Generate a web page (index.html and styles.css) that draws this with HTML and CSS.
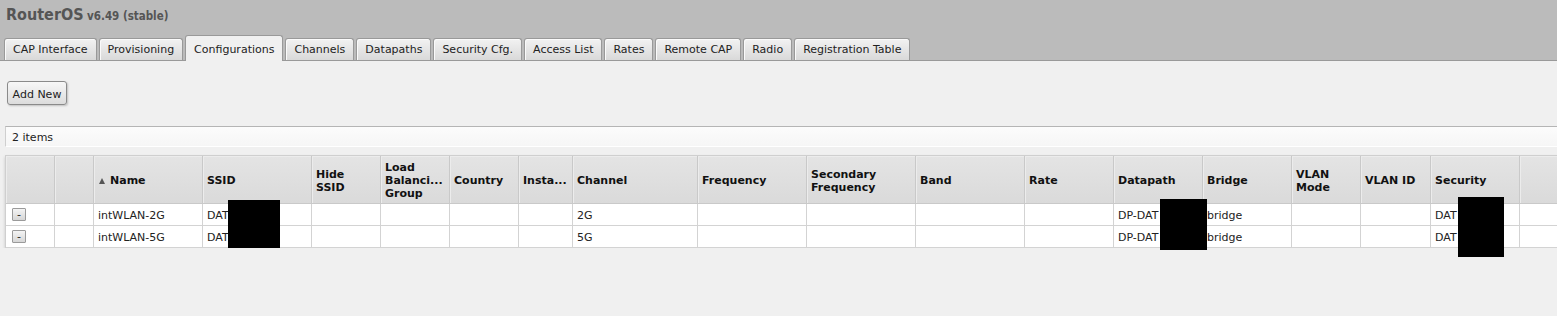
FILE: index.html
```html
<!DOCTYPE html>
<html>
<head>
<meta charset="utf-8">
<title>RouterOS</title>
<link rel="stylesheet" href="styles.css">
</head>
<body>
<div class="header">
  <div class="title"><span class="brand">RouterOS</span> <span class="version">v6.49 (stable)</span></div>
  <ul class="tabs">
    <li class="tab">CAP Interface</li>
    <li class="tab">Provisioning</li>
    <li class="tab active">Configurations</li>
    <li class="tab">Channels</li>
    <li class="tab">Datapaths</li>
    <li class="tab">Security Cfg.</li>
    <li class="tab">Access List</li>
    <li class="tab">Rates</li>
    <li class="tab">Remote CAP</li>
    <li class="tab">Radio</li>
    <li class="tab">Registration Table</li>
  </ul>
</div>
<div class="content">
  <div class="toolbar"><button class="btn">Add New</button></div>
  <div class="items">2 items</div>
  <table class="grid">
    <colgroup>
      <col class="c49"><col class="c39"><col class="c109"><col class="c109"><col class="c69"><col class="c69"><col class="c69"><col class="c54"><col class="c125"><col class="c109"><col class="c109"><col class="c109"><col class="c89"><col class="c89"><col class="c89"><col class="c69"><col class="c70"><col class="c89"><col class="c100">
    </colgroup>
    <thead>
      <tr>
        <th></th><th></th>
        <th><span class="sort"></span>Name</th>
        <th>SSID</th>
        <th>Hide<br>SSID</th>
        <th>Load<br>Balanci...<br>Group</th>
        <th>Country</th>
        <th>Insta...</th>
        <th>Channel</th>
        <th>Frequency</th>
        <th>Secondary<br>Frequency</th>
        <th>Band</th>
        <th>Rate</th>
        <th>Datapath</th>
        <th>Bridge</th>
        <th>VLAN<br>Mode</th>
        <th>VLAN ID</th>
        <th>Security</th>
        <th></th>
      </tr>
    </thead>
    <tbody>
      <tr>
        <td class="first"><span class="minus">-</span></td><td></td>
        <td>intWLAN-2G</td><td>DAT</td><td></td><td></td><td></td><td></td>
        <td>2G</td><td></td><td></td><td></td><td></td>
        <td>DP-DAT</td><td>bridge</td><td></td><td></td><td>DAT</td><td></td>
      </tr>
      <tr>
        <td class="first"><span class="minus">-</span></td><td></td>
        <td>intWLAN-5G</td><td>DAT</td><td></td><td></td><td></td><td></td>
        <td>5G</td><td></td><td></td><td></td><td></td>
        <td>DP-DAT</td><td>bridge</td><td></td><td></td><td>DAT</td><td></td>
      </tr>
    </tbody>
  </table>
</div>
<div class="redact r-ssid"></div>
<div class="redact r-dp"></div>
<div class="redact r-sec"></div>
</body>
</html>
```

FILE: styles.css
```css
* { box-sizing: border-box; }
html, body { margin: 0; padding: 0; }
body {
  background: #f0f0f0;
  font-family: "DejaVu Sans", Verdana, sans-serif;
  font-size: 11px;
  color: #222;
  overflow: hidden;
  position: relative;
  min-height: 316px;
}
.header {
  background: #bbbbbb;
  height: 61px;
  border-bottom: 1px solid #999;
  display: flex;
  flex-direction: column;
  justify-content: space-between;
}
.title {
  padding: 5px 0 0 6px;
  line-height: 20px;
  color: #555;
  font-family: "DejaVu Sans Condensed", "DejaVu Sans", sans-serif;
  font-stretch: condensed;
  font-weight: bold;
  white-space: nowrap;
}
.brand { font-size: 16px; }
.version { font-size: 11.5px; }
.tabs {
  list-style: none;
  margin: 0;
  padding: 0 0 0 4px;
  display: flex;
  align-items: flex-end;
  gap: 2px;
}
.tab {
  height: 22px;
  line-height: 21px;
  padding: 0 8px;
  border: 1px solid #999;
  border-bottom: none;
  border-radius: 3px 3px 0 0;
  background: linear-gradient(#f2f2f2, #d9d9d9);
  box-shadow: inset 1px 1px 0 #fafafa;
  white-space: nowrap;
  color: #222;
}
.tab.active {
  height: 26px;
  margin-bottom: -1px;
  padding-top: 3px;
  background: #f0f0f0;
  box-shadow: none;
  position: relative;
}
.content {
  padding-left: 5px;
  overflow: hidden;
}
.toolbar {
  padding: 20px 0 0 2px;
  height: 65px;
}
.btn {
  width: 60px;
  height: 24px;
  padding: 2px 0 0;
  border: 1px solid #8a8a8a;
  border-radius: 3px;
  background: linear-gradient(#f7f7f7, #dcdcdc);
  box-shadow: 1px 1px 2px rgba(0,0,0,0.2);
  font-family: "DejaVu Sans", Verdana, sans-serif;
  font-size: 11px;
  color: #222;
}
.items {
  width: calc(100% + 10px);
  height: 21px;
  line-height: 21px;
  padding-left: 6px;
  border-top: 1px solid #b5b5b5;
  border-left: 1px solid #cfcfcf;
  border-bottom: 1px solid #fff;
  background: linear-gradient(#fcfcfc, #f6f6f6);
  color: #222;
}
.grid {
  margin-top: 8px;
  table-layout: fixed;
  width: 1614px;
  border-collapse: separate;
  border-spacing: 0;
  border-top: 1px solid #cfcfcf;
  border-left: 1px solid #cfcfcf;
  box-shadow: 0 2px 3px rgba(0,0,0,0.18);
}
.c49 { width: 49px; } .c39 { width: 39px; } .c109 { width: 109px; }
.c69 { width: 69px; } .c70 { width: 70px; } .c54 { width: 54px; }
.c125 { width: 125px; } .c89 { width: 89px; } .c100 { width: 100px; }
.grid th {
  height: 48px;
  padding: 2px 4px 0;
  text-align: left;
  vertical-align: middle;
  font-weight: bold;
  line-height: 13px;
  color: #111;
  background: linear-gradient(#e4e4e4, #dadada);
  border-right: 1px solid #c9c9c9;
  border-bottom: 1px solid #c9c9c9;
  box-shadow: inset 1px 1px 0 #ececec;
  white-space: nowrap;
  overflow: hidden;
}
.sort {
  display: inline-block;
  width: 0; height: 0;
  border-left: 3px solid transparent;
  border-right: 3px solid transparent;
  border-bottom: 6px solid #555;
  margin: 0 5px 1px 1px;
  vertical-align: middle;
}
.grid td {
  height: 22px;
  padding: 2px 4px 0;
  background: #fff;
  border-right: 1px solid #d3d3d3;
  border-bottom: 1px solid #d3d3d3;
  white-space: nowrap;
  overflow: hidden;
  color: #222;
}
.grid td.first { padding: 0 0 0 6px; }
.minus {
  display: inline-block;
  width: 14px;
  height: 13px;
  line-height: 11px;
  text-align: center;
  border: 1px solid #9a9a9a;
  border-radius: 1px;
  background: linear-gradient(#f4f4f4, #d6d6d6);
  font-size: 11px;
  vertical-align: middle;
}
.redact {
  position: absolute;
  background: #000;
}
.r-ssid { left: 228px; top: 200px; width: 52px; height: 48px; }
.r-dp { left: 1160px; top: 199px; width: 47px; height: 51px; }
.r-sec { left: 1458px; top: 197px; width: 46px; height: 60px; }
```
